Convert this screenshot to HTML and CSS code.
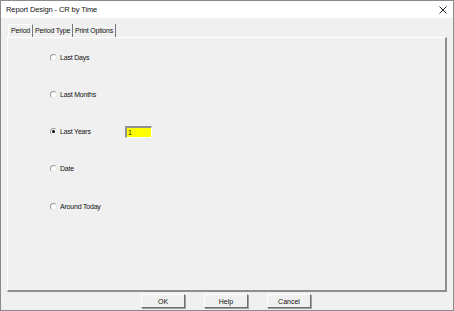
FILE: index.html
```html
<!DOCTYPE html>
<html lang="en">
<head>
  <meta charset="UTF-8" />
  <title>Report Design - CR by Time</title>
  <link rel="stylesheet" href="styles.css">
</head>
<body>
  <div class="window">
    <div class="titlebar">
      <span class="title">Report Design - CR by Time</span>
      <svg class="close" width="8" height="8" viewBox="0 0 8 8"><path d="M0.5 0.5 L7.5 7.5 M7.5 0.5 L0.5 7.5" stroke="#222" stroke-width="1"/></svg>
    </div>
    <div class="content">
      <!-- Tabs -->
      <div class="tabs">
        <div class="tab active">Period</div>
        <div class="tab">Period Type</div>
        <div class="tab">Print Options</div>
      </div>
      <div class="panel">
        <div class="option"><span class="radio"></span><span class="label">Last Days</span></div>
        <div class="option"><span class="radio"></span><span class="label">Last Months</span></div>
        <div class="option"><span class="radio checked"></span><span class="label">Last Years</span><span class="field">1</span></div>
        <div class="option"><span class="radio"></span><span class="label">Date</span></div>
        <div class="option"><span class="radio"></span><span class="label">Around Today</span></div>
      </div>
      <!-- Buttons -->
      <div class="buttons">
        <button class="btn default">OK</button>
        <button class="btn">Help</button>
        <button class="btn">Cancel</button>
      </div>
    </div>
  </div>
</body>
</html>
```

FILE: styles.css
```css
* { box-sizing: border-box; }
body { margin: 0; font-family: "Liberation Sans", Arial, sans-serif; font-size: 7px; letter-spacing: -0.2px; color: #111; background: #fff; }
.window { width: 454px; height: 311px; border: 1px solid #8a8a8a; display: flex; flex-direction: column; background: #f0f0f0; }
.titlebar { height: 17px; flex-shrink: 0; background: #fff; display: flex; align-items: center; justify-content: space-between; padding: 0 6px 0 5px; }
.title { font-size: 7.5px; letter-spacing: -0.1px; }
.close { display: block; }
.content { flex: 1; padding: 6px 6px 0 6px; display: flex; flex-direction: column; }
.tabs { display: flex; height: 13px; flex-shrink: 0; padding-left: 1px; }
.tab { padding: 3px 2px 0 2px; border-right: 1px solid #777; }
.tab.active { border-left: 1px solid #fff; border-top: 1px solid #fff; padding-top: 2px; }
.panel { height: 255px; flex-shrink: 0; border-top: 1px solid #fff; border-left: 1px solid #fff; border-right: 2px solid #8e8e8e; border-bottom: 2px solid #8e8e8e; padding: 14px 0 0 42px; display: flex; flex-direction: column; gap: 27.3px; }
.option { display: flex; align-items: center; height: 10px; }
.radio { width: 7px; height: 7px; border-radius: 50%; border: 1px solid #9a9a9a; border-right-color: #e8e8e8; border-bottom-color: #e8e8e8; background: #fff; margin-right: 3px; display: flex; align-items: center; justify-content: center; }
.radio.checked::after { content: ""; width: 3px; height: 3px; border-radius: 50%; background: #000; }
.label { width: 65px; }
.field { width: 27px; height: 12px; background: #ffff00; border-top: 2px solid #909090; border-left: 2px solid #909090; border-right: 1px solid #fff; border-bottom: 1px solid #fff; padding-left: 1px; line-height: 9px; }
.buttons { display: flex; justify-content: center; gap: 19px; padding-top: 2px; padding-right: 2px; }
.btn { width: 44px; height: 14px; font: inherit; font-size: 7px; background: #f0f0f0; border: 1px solid #fff; border-right-color: #6e6e6e; border-bottom-color: #6e6e6e; padding: 0; color: #111; box-shadow: 1px 1px 0 #a0a0a0; }
.btn.default { border: 1px solid #6e6e6e; border-top-color: #fff; border-left-color: #fff; }
```
